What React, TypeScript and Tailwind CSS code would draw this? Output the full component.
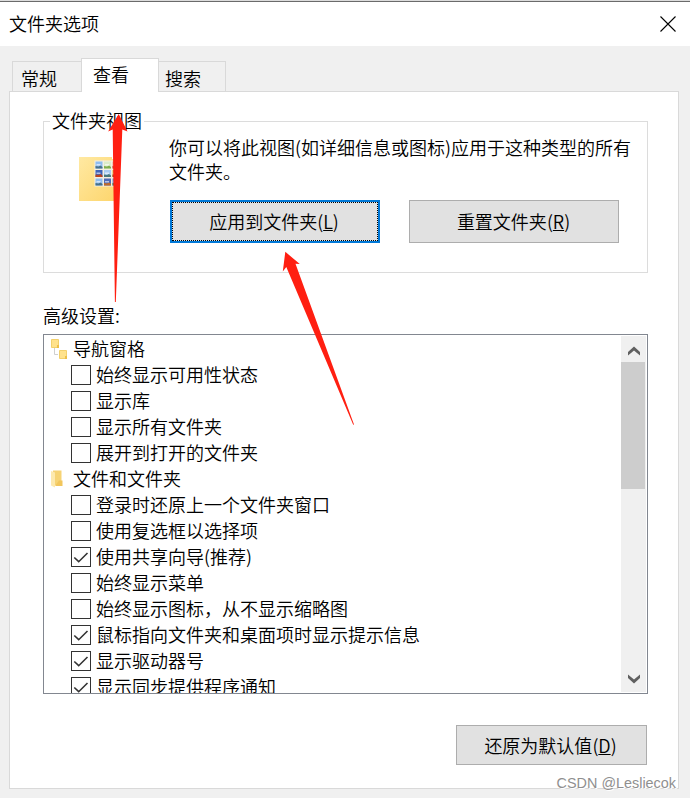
import React, { useState } from 'react';

type Row = {
  label: string;
  icon?: 'tree' | 'folder';
  checked?: boolean;
};

const initialRows: Row[] = [
  { label: '导航窗格', icon: 'tree' },
  { label: '始终显示可用性状态', checked: false },
  { label: '显示库', checked: false },
  { label: '显示所有文件夹', checked: false },
  { label: '展开到打开的文件夹', checked: false },
  { label: '文件和文件夹', icon: 'folder' },
  { label: '登录时还原上一个文件夹窗口', checked: false },
  { label: '使用复选框以选择项', checked: false },
  { label: '使用共享向导(推荐)', checked: true },
  { label: '始终显示菜单', checked: false },
  { label: '始终显示图标，从不显示缩略图', checked: false },
  { label: '鼠标指向文件夹和桌面项时显示提示信息', checked: true },
  { label: '显示驱动器号', checked: true },
  { label: '显示同步提供程序通知', checked: true },
];

const TreeIcon = () => (
  <svg className="block h-[20px] w-[17px]" viewBox="0 0 17 20" aria-hidden="true">
    <path d="M4.500 9v6.500H8" fill="none" stroke="#cfcfcf" />
    <path d="M1.500 .5h7v8h-7z" fill="#ffe28c" stroke="#f2d06c" />
    <path d="M9.500 11.500h7v8h-7z" fill="#ffe28c" stroke="#f2d06c" />
    <path d="M15 17h2v3h-2z" fill="#edbf48" />
    <path d="M7 6h2v3H7z" fill="#edbf48" />
  </svg>
);

const FolderIcon = () => (
  <svg className="block h-[18px] w-[17px]" viewBox="0 0 17 18" aria-hidden="true">
    <path d="M3 .5h8.500V15H3z" fill="#f6d375" />
    <path d="M9 10.500h3.500V16H5z" fill="#f2c65c" />
    <path d="M1 1l4 1.500v15l-4-2z" fill="#fde9ae" />
  </svg>
);

const tiles = [
  ['#8fbcf0', '#47708a'], ['#dcecc8', '#7fae4c'], ['#e9a58c', '#c43a2a'],
  ['#3f63b8', '#b8421f'], ['#a9cdf2', '#4a7a7a'], ['#e3b23b', '#8a3a1a'],
  ['#8fbcf0', '#47708a'], ['#4f6bb8', '#c06a26'], ['#5b93dd', '#3c7a3c'],
];

const BigFolder = () => (
  <svg className="block h-[44px] w-[38px]" viewBox="0 0 38 44" aria-hidden="true">
    <defs>
      <linearGradient id="folder" x1="0" y1="0" x2="1" y2="1">
        <stop offset="0" stopColor="#ffe9a2" />
        <stop offset="1" stopColor="#fdd56c" />
      </linearGradient>
    </defs>
    <path d="M0 0h33v2h5v42H0z" fill="url(#folder)" />
    {tiles.map(([top, bottom], i) => {
      const x = 16.5 + (i % 3) * 8.5;
      const y = 4.5 + Math.floor(i / 3) * 8.5;
      return (
        <g key={i}>
          <path d={`M${x - 1} ${y - 1}h9v9h-9z`} fill="#f4efe0" />
          <path d={`M${x} ${y}h7v7h-7z`} fill={top} />
          <path d={`M${x} ${y + 4.5}l3 .5 2-1 2 1.500v1.500h-7z`} fill={bottom} />
          <path d={`M${x + 1} ${y + 2.5}h4v1.500h-4z`} fill="#ffffff" opacity="0.6" />
        </g>
      );
    })}
  </svg>
);

const Checkbox = ({ checked }: { checked?: boolean }) => (
  <span className="block h-5 w-5 shrink-0 border border-[#333333] bg-white">
    {checked && (
      <svg className="block h-[18px] w-[18px]" viewBox="0 0 18 18" aria-hidden="true">
        <path d="M2.300 9.500l4.400 4.200 8.800-8.700" fill="none" stroke="#333333" strokeWidth="1.600" />
      </svg>
    )}
  </span>
);

const Mnemonic = ({ text, letter }: { text: string; letter: string }) => (
  <span>
    {text}(<span className="underline decoration-1 underline-offset-1">{letter}</span>)
  </span>
);

const App: React.FC = () => {
  const [rows, setRows] = useState(initialRows);

  const toggle = (index: number) => {
    setRows(rows.map((row, i) => (i === index ? { ...row, checked: !row.checked } : row)));
  };

  return (
    <div className="relative flex h-[798px] w-[690px] flex-col overflow-hidden bg-[#f0f0f0] font-['Noto_Sans_CJK_SC',sans-serif] text-[18px] leading-[26px] font-[350] text-black">
      <div className="h-px shrink-0 bg-[#dcdcdc]" />
      <header className="flex h-[45px] shrink-0 items-center justify-between border-t border-[#6b6b6b] bg-white pr-[14px] pb-[2px] pl-[9px]">
        <h1>文件夹选项</h1>
        <button aria-label="关闭" className="mt-px">
          <svg className="block h-4 w-4" viewBox="0 0 16 16">
            <path d="M.5 .5l15 15M15.500 .5l-15 15" fill="none" stroke="#000000" strokeWidth="1.100" />
          </svg>
        </button>
      </header>

      <nav className="mt-3 -mb-px ml-3 flex shrink-0 items-end">
        <button className="h-[31px] w-[69px] border border-r-0 border-[#d9d9d9] pt-[2px] pl-[8px] text-left">常规</button>
        <button className="z-10 h-[34px] w-[78px] border border-b-0 border-[#d9d9d9] bg-white pb-[3px] pl-[11px] text-left">查看</button>
        <button className="h-[31px] w-[67px] border border-l-0 border-[#d9d9d9] pt-[2px] pl-[6px] text-left">搜索</button>
      </nav>

      <main className="mr-[11px] mb-[9px] ml-[9px] flex flex-1 flex-col border border-[#d9d9d9] bg-white pr-[30px] pl-[33px]">
        <fieldset className="mt-[16px] h-[165px] shrink-0 border border-[#dcdcdc] pl-[6px]">
          <legend className="px-[2px] pb-[2px] leading-6">文件夹视图</legend>
          <div className="flex">
            <div className="mt-[23px] ml-[29px] w-[90px] shrink-0">
              <BigFolder />
            </div>
            <div className="mt-px flex-1">
              <p className="w-[470px] leading-6">你可以将此视图(如详细信息或图标)应用于这种类型的所有文件夹。</p>
              <div className="mt-[17px] ml-px flex gap-[29px]">
                <button className="h-[43px] w-[210px] border-2 border-[#0078d7] bg-[#e1e1e1]">
                  <span className="flex h-full w-full items-center justify-center border border-dotted border-black pr-[2px] pb-[2px]">
                    <Mnemonic text="应用到文件夹" letter="L" />
                  </span>
                </button>
                <button className="h-[43px] w-[210px] border border-[#adadad] bg-[#e1e1e1] pr-px pb-[2px]">
                  <Mnemonic text="重置文件夹" letter="R" />
                </button>
              </div>
            </div>
          </div>
        </fieldset>

        <h2 className="mt-[29px] mb-px h-[31px] shrink-0">高级设置:</h2>
        <section className="flex h-[360px] shrink-0 justify-between overflow-hidden border border-[#828790]">
          <ul className="pt-[2px] pl-[6px]">
            {rows.map((row, i) =>
              row.icon ? (
                <li key={row.label} className="flex h-[26px] items-center gap-[6px] pb-[2px]">
                  {row.icon === 'tree' ? <TreeIcon /> : <FolderIcon />}
                  <span className="pb-[2px]">{row.label}</span>
                </li>
              ) : (
                <li key={row.label} onClick={() => toggle(i)} className="flex h-[26px] items-center gap-[5px] pb-[2px] pl-[21px]">
                  <Checkbox checked={row.checked} />
                  <span className="pb-[2px]">{row.label}</span>
                </li>
              )
            )}
          </ul>
          <div className="my-px mr-px flex w-[25px] flex-col bg-[#f0f0f0]">
            <div className="flex h-[26px] items-center justify-center">
              <svg className="mt-[3px] block h-[10px] w-[12px]" viewBox="0 0 12 10" aria-hidden="true">
                <path d="M0 9.500V6l6-5.500L12 6v3.500L6 4.500z" fill="#606060" />
              </svg>
            </div>
            <div className="h-[127px] w-6 bg-[#cdcdcd]" />
            <div className="mt-auto flex h-[26px] items-center justify-center">
              <svg className="block h-[10px] w-[12px]" viewBox="0 0 12 10" aria-hidden="true">
                <path d="M0 .5V4l6 5.500L12 4V.5L6 5.500z" fill="#606060" />
              </svg>
            </div>
          </div>
        </section>

        <button className="mt-[31px] mr-px h-10 w-[191px] shrink-0 self-end border border-[#adadad] bg-[#e1e1e1] pr-[2px] pb-px">
          <Mnemonic text="还原为默认值" letter="D" />
        </button>
      </main>

      {/* annotation arrows */}
      <svg className="pointer-events-none absolute inset-0 z-20 h-[798px] w-[690px]" viewBox="0 0 690 798" aria-hidden="true">
        <path d="M118.700 114l8.800 17.500-5.200-2L115.800 302h-.9L112.700 129.500l-4.600 2z" fill="#ff1f11" />
        <path d="M285.300 251.800l14.500 12.300-4.300-.4L354 424.500l-.8.3L286.300 267l-3.500 4.500z" fill="#ff1f11" />
      </svg>
      <span className="absolute right-[14px] bottom-[6px] z-20 font-['Liberation_Sans',sans-serif] text-[14.4px] leading-[18px] font-normal text-[#8f8f8f] [text-shadow:1px_1px_0_#ffffff]">
        CSDN @Lesliecok
      </span>
    </div>
  );
};

export default App;
